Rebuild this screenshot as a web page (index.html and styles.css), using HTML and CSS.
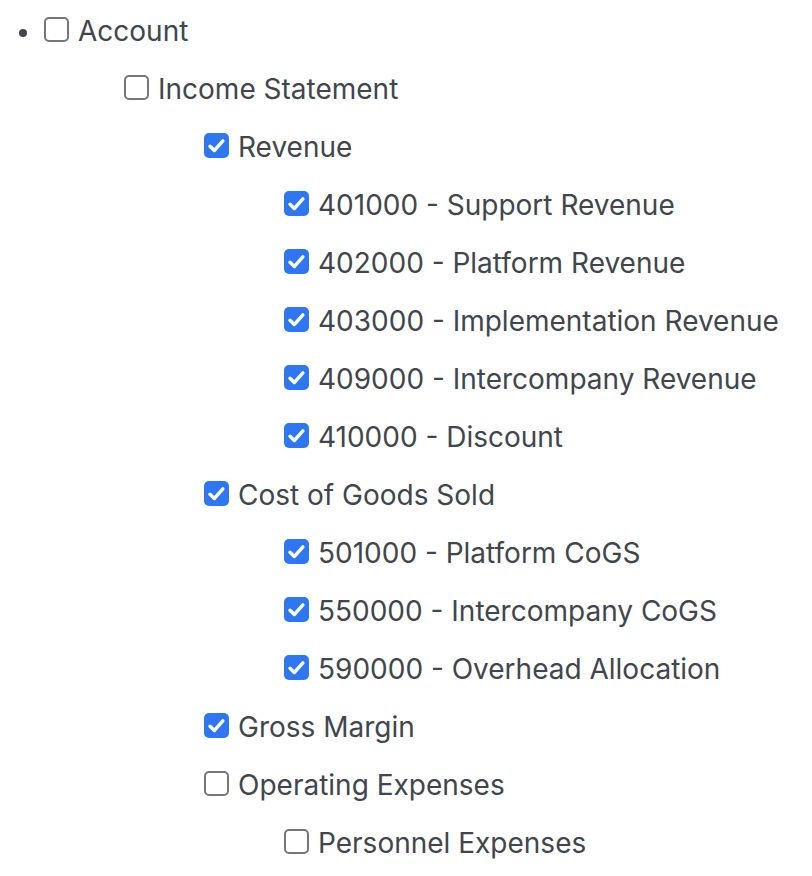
FILE: index.html
```html
<!DOCTYPE html>
<html lang="en">
<head>
    <meta charset="UTF-8">
    <meta name="viewport" content="width=device-width, initial-scale=1.0">
    <title>Account Tree</title>
    <link rel="stylesheet" href="styles.css">
</head>
<body>
    <ul class="tree">
        <li class="root">
            <label class="row"><span class="box"></span>Account</label>
            <ul>
                <li>
                    <label class="row"><span class="box"></span>Income Statement</label>
                    <ul>
                        <li>
                            <label class="row"><span class="box checked"><svg viewBox="0 0 25 25"><path d="M6 13.2l4.3 4.3 8.6-9.6"/></svg></span>Revenue</label>
                            <ul>
                                <li><label class="row"><span class="box checked"><svg viewBox="0 0 25 25"><path d="M6 13.2l4.3 4.3 8.6-9.6"/></svg></span>401000 - Support Revenue</label></li>
                                <li><label class="row"><span class="box checked"><svg viewBox="0 0 25 25"><path d="M6 13.2l4.3 4.3 8.6-9.6"/></svg></span>402000 - Platform Revenue</label></li>
                                <li><label class="row"><span class="box checked"><svg viewBox="0 0 25 25"><path d="M6 13.2l4.3 4.3 8.6-9.6"/></svg></span>403000 - Implementation Revenue</label></li>
                                <li><label class="row"><span class="box checked"><svg viewBox="0 0 25 25"><path d="M6 13.2l4.3 4.3 8.6-9.6"/></svg></span>409000 - Intercompany Revenue</label></li>
                                <li><label class="row"><span class="box checked"><svg viewBox="0 0 25 25"><path d="M6 13.2l4.3 4.3 8.6-9.6"/></svg></span>410000 - Discount</label></li>
                            </ul>
                        </li>
                        <li>
                            <label class="row"><span class="box checked"><svg viewBox="0 0 25 25"><path d="M6 13.2l4.3 4.3 8.6-9.6"/></svg></span>Cost of Goods Sold</label>
                            <ul>
                                <li><label class="row"><span class="box checked"><svg viewBox="0 0 25 25"><path d="M6 13.2l4.3 4.3 8.6-9.6"/></svg></span>501000 - Platform CoGS</label></li>
                                <li><label class="row"><span class="box checked"><svg viewBox="0 0 25 25"><path d="M6 13.2l4.3 4.3 8.6-9.6"/></svg></span>550000 - Intercompany CoGS</label></li>
                                <li><label class="row"><span class="box checked"><svg viewBox="0 0 25 25"><path d="M6 13.2l4.3 4.3 8.6-9.6"/></svg></span>590000 - Overhead Allocation</label></li>
                            </ul>
                        </li>
                        <li>
                            <label class="row"><span class="box checked"><svg viewBox="0 0 25 25"><path d="M6 13.2l4.3 4.3 8.6-9.6"/></svg></span>Gross Margin</label>
                        </li>
                        <li>
                            <label class="row"><span class="box"></span>Operating Expenses</label>
                            <ul>
                                <li><label class="row"><span class="box"></span>Personnel Expenses</label></li>
                            </ul>
                        </li>
                    </ul>
                </li>
            </ul>
        </li>
    </ul>
</body>
</html>
```

FILE: styles.css
```css
* {
    margin: 0;
    padding: 0;
    box-sizing: border-box;
}

body {
    font-family: Inter, 'Noto Sans', sans-serif;
    font-size: 28px;
    color: #41464d;
    background: white;
    padding-top: 2px;
}

ul {
    list-style: none;
}

.tree {
    padding-left: 44px;
}

.tree ul {
    padding-left: 80px;
}

.root {
    position: relative;
}

.root::before {
    content: '';
    position: absolute;
    left: -25px;
    top: 27px;
    width: 8px;
    height: 8px;
    border-radius: 50%;
    background: #41464d;
}

.row {
    display: flex;
    align-items: center;
    height: 58px;
    white-space: nowrap;
}

.box {
    flex: none;
    width: 25px;
    height: 25px;
    margin-right: 9px;
    margin-bottom: 4px;
    border: 2px solid #767676;
    border-radius: 5px;
    background: white;
}

.box.checked {
    border: none;
    background: #2f76f2;
}

.box svg {
    display: block;
    width: 25px;
    height: 25px;
}

.box path {
    fill: none;
    stroke: white;
    stroke-width: 3.4;
    stroke-linecap: round;
    stroke-linejoin: round;
}
```
